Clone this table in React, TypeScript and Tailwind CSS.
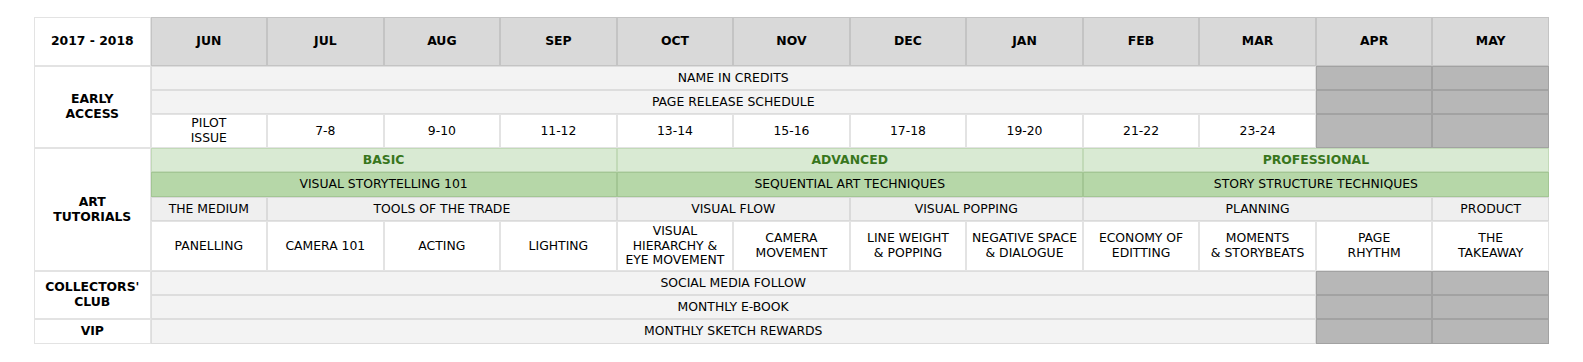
import React from "react";

const MONTHS = ["JUN", "JUL", "AUG", "SEP", "OCT", "NOV", "DEC", "JAN", "FEB", "MAR", "APR", "MAY"];
const ISSUES = ["PILOT\nISSUE", "7-8", "9-10", "11-12", "13-14", "15-16", "17-18", "19-20", "21-22", "23-24"];
const LESSONS = [
  "PANELLING",
  "CAMERA 101",
  "ACTING",
  "LIGHTING",
  "VISUAL\nHIERARCHY &\nEYE MOVEMENT",
  "CAMERA\nMOVEMENT",
  "LINE WEIGHT\n& POPPING",
  "NEGATIVE SPACE\n& DIALOGUE",
  "ECONOMY OF\nEDITTING",
  "MOMENTS\n& STORYBEATS",
  "PAGE\nRHYTHM",
  "THE\nTAKEAWAY",
];

// cell looks: each cell carries its own 1px border, so neighbours show a 2px seam
const base = "border border-solid p-0 text-center align-middle whitespace-pre-line";
const LABEL = `${base} bg-white border-[#e3e3e3] font-bold`;
const HEAD = `${base} bg-[#d9d9d9] border-[#c4c4c4] font-bold`;
const LIGHT = `${base} bg-[#f3f3f3] border-[#dddddd]`;
const WHITE = `${base} bg-white border-[#e3e3e3]`;
const DARK = `${base} bg-[#b7b7b7] border-[#a2a2a2]`;
const GREEN_LIGHT = `${base} bg-[#d9ead3] border-[#c2dab8] font-bold text-[#38761d]`;
const GREEN = `${base} bg-[#b6d7a8] border-[#a3c694]`;
const SUB = `${base} bg-[#efefef] border-[#dadada]`;

function Blocked() {
  return (
    <>
      <td className={DARK} />
      <td className={DARK} />
    </>
  );
}

export default function App() {
  return (
    <div className="bg-white w-[1583px] h-[362px] px-[34px] pt-[17px]">
      <table
        className="w-full table-fixed border-separate border-spacing-0 text-black text-[12.4px] leading-[14.6px]"
        style={{ fontFamily: "'DejaVu Sans', Verdana, sans-serif" }}
      >
        <tbody>
          <tr className="h-[49px]">
            <td className={LABEL}>2017 - 2018</td>
            {MONTHS.map((m) => (
              <td key={m} className={HEAD}>{m}</td>
            ))}
          </tr>

          <tr className="h-[24px]">
            <td rowSpan={3} className={LABEL}>{"EARLY\nACCESS"}</td>
            <td colSpan={10} className={LIGHT}>NAME IN CREDITS</td>
            <Blocked />
          </tr>
          <tr className="h-[24px]">
            <td colSpan={10} className={LIGHT}>PAGE RELEASE SCHEDULE</td>
            <Blocked />
          </tr>
          <tr className="h-[34px]">
            {ISSUES.map((i) => (
              <td key={i} className={WHITE}>{i}</td>
            ))}
            <Blocked />
          </tr>

          <tr className="h-[24px]">
            <td rowSpan={4} className={LABEL}>{"ART\nTUTORIALS"}</td>
            <td colSpan={4} className={GREEN_LIGHT}>BASIC</td>
            <td colSpan={4} className={GREEN_LIGHT}>ADVANCED</td>
            <td colSpan={4} className={GREEN_LIGHT}>PROFESSIONAL</td>
          </tr>
          <tr className="h-[25px]">
            <td colSpan={4} className={GREEN}>VISUAL STORYTELLING 101</td>
            <td colSpan={4} className={GREEN}>SEQUENTIAL ART TECHNIQUES</td>
            <td colSpan={4} className={GREEN}>STORY STRUCTURE TECHNIQUES</td>
          </tr>
          <tr className="h-[24px]">
            <td className={SUB}>THE MEDIUM</td>
            <td colSpan={3} className={SUB}>TOOLS OF THE TRADE</td>
            <td colSpan={2} className={SUB}>VISUAL FLOW</td>
            <td colSpan={2} className={SUB}>VISUAL POPPING</td>
            <td colSpan={3} className={SUB}>PLANNING</td>
            <td className={SUB}>PRODUCT</td>
          </tr>
          <tr className="h-[50px]">
            {LESSONS.map((l) => (
              <td key={l} className={WHITE}>{l}</td>
            ))}
          </tr>

          <tr className="h-[24px]">
            <td rowSpan={2} className={LABEL}>{"COLLECTORS'\nCLUB"}</td>
            <td colSpan={10} className={LIGHT}>SOCIAL MEDIA FOLLOW</td>
            <Blocked />
          </tr>
          <tr className="h-[24px]">
            <td colSpan={10} className={LIGHT}>MONTHLY E-BOOK</td>
            <Blocked />
          </tr>
          <tr className="h-[25px]">
            <td className={LABEL}>VIP</td>
            <td colSpan={10} className={LIGHT}>MONTHLY SKETCH REWARDS</td>
            <Blocked />
          </tr>
        </tbody>
      </table>
    </div>
  );
}
